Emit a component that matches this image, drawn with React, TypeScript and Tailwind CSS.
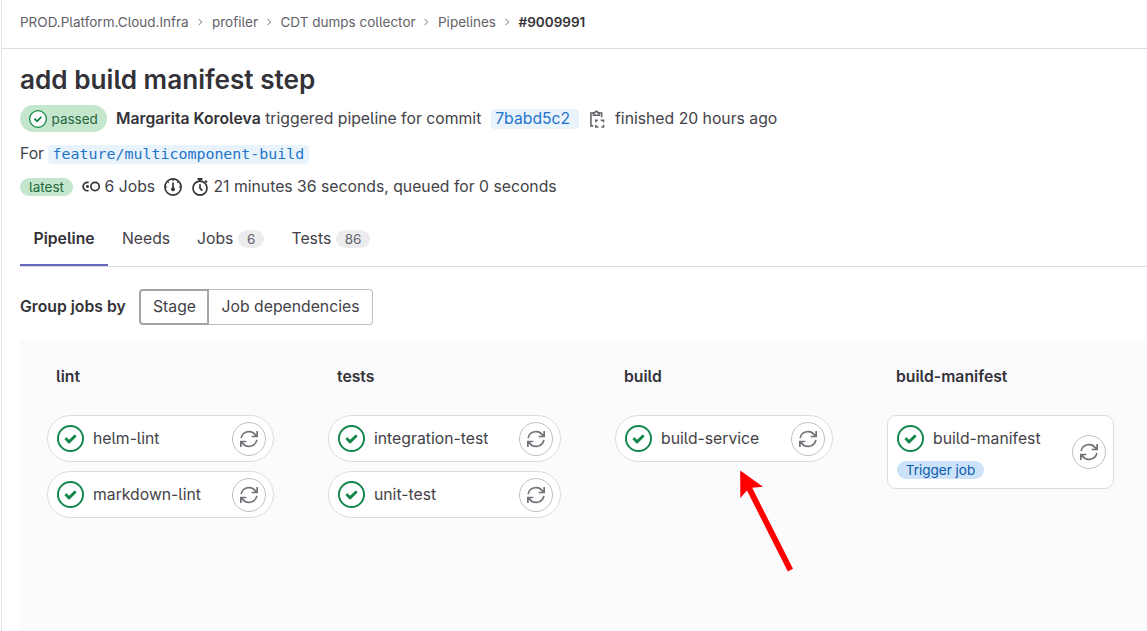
import type { ReactNode } from "react";

const CHECK =
  "M6.278 7.697L5.045 6.464a.296.296 0 0 0-.42-.002l-.613.614a.298.298 0 0 0 .002.42l1.91 1.909a.5.5 0 0 0 .703.005l.265-.265L9.997 6.04a.291.291 0 0 0-.009-.408l-.614-.614a.29.29 0 0 0-.408-.009L6.278 7.697z";

function StatusIcon({ className }: { className: string }) {
  return (
    <svg viewBox="0 0 14 14" className={className}>
      <circle cx="7" cy="7" r="6.5" fill="#fff" stroke="#108548" />
      <path d={CHECK} fill="#108548" />
    </svg>
  );
}

function RetryButton() {
  return (
    <button className="flex size-[34px] shrink-0 items-center justify-center rounded-full border border-[#bfbfc3] bg-white text-[#737278]">
      <svg viewBox="0 0 16 16" className="size-[18px]" fill="none" stroke="currentColor" strokeWidth="1.5">
        <path d="M1 7.2A7.05 7.05 0 0 1 14 4.9" />
        <path d="M15.25 .9v4.9h-4.9" />
        <path d="M15 8.8A7.05 7.05 0 0 1 2 11.1" />
        <path d="M.75 15.1v-4.9h4.9" />
        <path d="M15.25 3v2.8h-2.8zM.75 13v-2.8h2.8z" fill="currentColor" stroke="none" />
      </svg>
    </button>
  );
}

function CopyIcon() {
  return (
    <svg viewBox="0 0 16 16" className="size-[18px]" fill="none" stroke="#626168" strokeWidth="1.4">
      <path d="M4.6 2.7H2.6v11.4h2.1M10.2 2.7h1.9v3.8" />
      <path d="M4.9 4.6V2.5h1.2a1.3 1.3 0 0 1 2.6 0h1.2v2.1z" />
      <path d="M7 10.9V9.1h1.9M11.3 9.1h2.5v1.8M13.8 13.2V15.1h-1.9M9.3 15.1H7V13.2" />
    </svg>
  );
}

function JobsIcon() {
  return (
    <svg viewBox="0 0 16 16" className="size-[18px]" fill="none" stroke="#333238" strokeWidth="1.5">
      <circle cx="11.6" cy="7.6" r="3.7" />
      <path d="M5.9 4.1A3.7 3.7 0 1 0 5.9 11.1" />
      <circle cx="4.9" cy="7.6" r="1.3" fill="#333238" stroke="none" />
    </svg>
  );
}

function GaugeIcon() {
  return (
    <svg viewBox="0 0 16 16" className="size-[18px]" fill="none" stroke="#333238" strokeWidth="1.5">
      <circle cx="8" cy="8" r="7.2" />
      <path d="M8 4v6" />
      <circle cx="8" cy="10" r="1.7" fill="#333238" stroke="none" />
      <path d="M8 1v1.7M1 8h1.8M13.2 8H15M3.3 3.3l1 1M12.7 3.3l-1 1" strokeWidth="1" />
    </svg>
  );
}

function TimerIcon() {
  return (
    <svg viewBox="0 0 16 16" className="size-[18px]" fill="none" stroke="#333238" strokeWidth="1.5">
      <circle cx="8" cy="9" r="6.2" />
      <path d="M8 5.6V9l2 2.4" />
      <path d="M5.8.9h4.4M8 1v2M12.6 2.3l1.6 1.6" strokeWidth="1.7" />
    </svg>
  );
}

function Chevron() {
  return (
    <svg viewBox="0 0 8 8" className="mr-[8px] ml-[6.5px] size-2 shrink-0" fill="none" stroke="#737278" strokeWidth="1">
      <path d="M2.6 .9 5.7 4 2.6 7.1" />
    </svg>
  );
}

function Count({ children }: { children: ReactNode }) {
  return (
    <span className="flex h-[18px] items-center rounded-full bg-[#ececef] px-[8.8px] text-[13.5px] text-[#626168]">
      {children}
    </span>
  );
}

function Job({ name }: { name: string }) {
  return (
    <div className="mb-[9px] flex h-[47px] items-center rounded-full border border-[#dcdcde] bg-white pr-[7px] pl-[9px]">
      <StatusIcon className="mr-[9px] size-[27px] shrink-0" />
      <span className="grow">{name}</span>
      <RetryButton />
    </div>
  );
}

function Stage({ title, width, children }: { title: string; width: string; children: ReactNode }) {
  return (
    <section className={`shrink-0 ${width}`}>
      <h2 className="mb-[26px] pl-[9px] font-semibold text-[#333238]">{title}</h2>
      {children}
    </section>
  );
}

export default function App() {
  return (
    <div className="h-[631px] overflow-hidden bg-white pl-px font-['Inter',sans-serif] text-[15.75px] leading-6 whitespace-nowrap text-[#434248] [font-feature-settings:'cv05']">
      <div className="flex h-full flex-col border-l border-[#e4e4e6]">
        <nav className="flex h-[49px] shrink-0 items-center border-b border-[#dcdcde] pb-1 pl-[18px] text-[13.5px] text-[#626168]">
          <span className="w-[169.5px]">PROD.Platform.Cloud.Infra</span>
          <Chevron />
          <span className="w-[46px]">profiler</span>
          <Chevron />
          <span className="w-[135px]">CDT dumps collector</span>
          <Chevron />
          <span className="w-[58px]">Pipelines</span>
          <Chevron />
          <span className="font-semibold text-[#333238]">#9009991</span>
        </nav>

        <main className="flex grow flex-col pl-[18px]">
          <h1 className="mt-[15px] text-[26.15px] leading-8 font-semibold text-[#333238]">add build manifest step</h1>

          <div className="mt-[9px] flex h-[27px] items-center">
            <span className="mr-[9px] flex h-[27px] w-[87px] items-center rounded-full bg-[#c3e6cd] pl-[9px] text-[13.5px] text-[#24663b]">
              <StatusIcon className="mr-[4.5px] size-[18px]" />
              passed
            </span>
            <span className="mr-[4.5px] font-semibold text-[#333238]">Margarita Koroleva</span>
            <span className="w-[225.5px]">triggered pipeline for commit</span>
            <span className="flex h-5 w-[88px] items-center rounded bg-[#e9f3fc] pl-[4.5px] text-[#1f75cb]">7babd5c2</span>
            <span className="mr-[9.3px] ml-[9px]">
              <CopyIcon />
            </span>
            <span>finished 20 hours ago</span>
          </div>

          <div className="mt-[10px] flex h-6 items-center">
            <span className="w-7">For</span>
            <span className="flex h-[19px] w-[261px] items-center rounded bg-[#e9f3fc] pl-[4.5px] font-['DejaVu_Sans_Mono',monospace] text-[14.95px] text-[#1f75cb]">
              feature/multicomponent-build
            </span>
          </div>

          <div className="mt-[9px] flex h-6 items-center">
            <span className="mr-[9px] flex h-[18px] w-[53px] items-center justify-center rounded-full bg-[#c3e6cd] text-[13.5px] text-[#24663b]">
              latest
            </span>
            <JobsIcon />
            <span className="ml-[4.5px] w-[59.5px]">6 Jobs</span>
            <GaugeIcon />
            <span className="mr-[4.5px] ml-[9px]">
              <TimerIcon />
            </span>
            <span>21 minutes 36 seconds, queued for 0 seconds</span>
          </div>

          <div className="mt-[13px] flex h-[55px] border-b border-[#dcdcde]">
            <div className="-mb-px h-[54px] w-[88px] border-b-2 border-[#6666c4] pt-[15px] pl-[13.5px] font-semibold text-[#333238]">Pipeline</div>
            <div className="w-[75.5px] pt-[15px] pl-[14px]">Needs</div>
            <div className="flex h-[54px] w-[94.5px] items-start gap-[4.7px] pt-[15px] pl-[13.5px]">
              Jobs
              <span className="pt-[3px]">
                <Count>6</Count>
              </span>
            </div>
            <div className="flex h-[54px] items-start gap-[4.7px] pt-[15px] pl-[13.5px]">
              Tests
              <span className="pt-[3px]">
                <Count>86</Count>
              </span>
            </div>
          </div>

          <div className="mt-[22px] flex h-9 items-center">
            <span className="w-[119px] font-semibold text-[#333238]">Group jobs by</span>
            <button className="flex h-9 w-[70px] items-center justify-center rounded-l border-2 border-[#a4a3a8] pl-px">Stage</button>
            <button className="flex h-9 w-[164px] items-center justify-center rounded-r border border-l-0 border-[#bfbfc3]">
              Job dependencies
            </button>
          </div>

          <div className="relative mt-[14px] flex grow gap-[54px] bg-[#fbfafd] pt-[26px] pl-[27px]">
            <Stage title="lint" width="w-[227px]">
              <Job name="helm-lint" />
              <Job name="markdown-lint" />
            </Stage>
            <Stage title="tests" width="w-[233px]">
              <Job name="integration-test" />
              <Job name="unit-test" />
            </Stage>
            <Stage title="build" width="w-[218px]">
              <Job name="build-service" />
            </Stage>
            <Stage title="build-manifest" width="w-[227px]">
              <div className="flex h-[74px] items-center rounded-[9px] border border-[#dcdcde] bg-white pr-[7px] pl-[9px]">
                <div className="grow">
                  <div className="flex items-center">
                    <StatusIcon className="mr-[9px] size-[27px]" />
                    build-manifest
                  </div>
                  <div className="mt-[9px] flex h-[18px] w-[87px] items-center justify-center rounded-full bg-[#cbe2f9] text-[13.5px] text-[#0b5cad]">
                    Trigger job
                  </div>
                </div>
                <RetryButton />
              </div>
            </Stage>
            <svg viewBox="0 0 54 102" className="absolute top-[131px] left-[719px] h-[102px] w-[54px]" fill="#f00">
              <path d="M1.2 .5 24 16.7 13.2 17.8 54 98.8 48.8 101.5 8 20.5 1.3 28z" />
            </svg>
          </div>
        </main>
      </div>
    </div>
  );
}
